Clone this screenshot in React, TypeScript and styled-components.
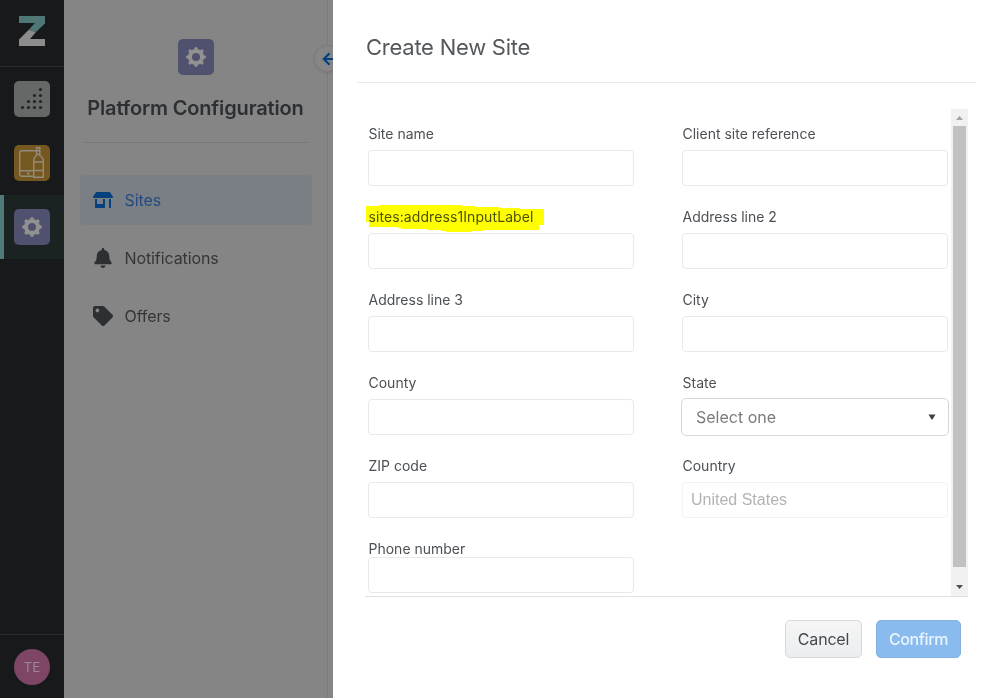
import React from "react";
import styled, { createGlobalStyle } from "styled-components";
import { FaBell, FaStoreAlt, FaTag } from "react-icons/fa";

const GlobalStyle = createGlobalStyle`
  * { box-sizing: border-box; }
  body { margin: 0; overflow: hidden; background: #858585; }
  body, button, select { font-family: Inter, "Open Sans", sans-serif; }
`;

const Page = styled.div`
  display: flex;
  width: 997px;
  height: 698px;
  overflow: hidden;
`;

const Rail = styled.aside`
  display: flex;
  flex-direction: column;
  width: 64px;
  background: #17191b;
`;

const RailLogo = styled.div`
  display: flex;
  justify-content: center;
  height: 67px;
  padding-top: 16px;
  border-bottom: 1px solid #292b2d;
`;

const RailItem = styled.div<{ $active?: boolean }>`
  display: flex;
  align-items: center;
  justify-content: center;
  height: 64px;
  padding-right: ${(p) => (p.$active ? "4px" : "0")};
  border-left: ${(p) => (p.$active ? "4px solid #4e7b79" : "0")};
  background: ${(p) => (p.$active ? "#1b2222" : "transparent")};
`;

const RailFooter = styled.div`
  display: flex;
  justify-content: center;
  height: 64px;
  margin-top: auto;
  padding-top: 14px;
  border-top: 1px solid #292b2d;
`;

const Tile = styled.div<{ $color: string }>`
  display: flex;
  align-items: center;
  justify-content: center;
  width: 36px;
  height: 36px;
  border-radius: 5px;
  background: ${(p) => p.$color};
`;

const Avatar = styled.div`
  width: 36px;
  height: 36px;
  border-radius: 50%;
  background: #7e4565;
  color: #9b8793;
  font-size: 13.5px;
  line-height: 36px;
  text-align: center;
`;

const Panel = styled.nav`
  position: relative;
  display: flex;
  flex-direction: column;
  align-items: center;
  width: 264px;
  padding-top: 39px;
  border-right: 1px solid #7b7b7b;
  background: #858585;
`;

const PanelTitle = styled.h2`
  margin: 20px 0 0;
  color: #2c3033;
  font-size: 20px;
  font-weight: 600;
  letter-spacing: -0.15px;
  line-height: 26px;
  white-space: nowrap;
`;

const PanelRule = styled.div`
  width: 224px;
  height: 1px;
  margin: 21px 0 32px;
  background: #787878;
`;

const NavItem = styled.a<{ $active?: boolean }>`
  display: flex;
  align-items: center;
  gap: 12px;
  width: 232px;
  height: 50px;
  margin-bottom: 8px;
  padding-left: 13px;
  border-radius: 4px;
  background: ${(p) => (p.$active ? "#7a7f85" : "transparent")};
  color: ${(p) => (p.$active ? "#234a80" : "#343638")};
  font-size: 16px;
  letter-spacing: -0.1px;

  svg {
    width: 20px;
    height: auto;
    color: ${(p) => (p.$active ? "#05417d" : "#2c3033")};
  }
`;

const CollapseButton = styled.div`
  position: absolute;
  top: 45px;
  right: -14px;
  display: flex;
  align-items: center;
  justify-content: center;
  width: 27px;
  height: 27px;
  padding-left: 2px;
  border: 1px solid #7d7d7d;
  border-radius: 50%;
  background: #868686;
  box-shadow: 0 1px 3px rgba(0, 0, 0, 0.12);
`;

const Dialog = styled.section`
  position: relative;
  width: 664px;
  margin-left: 5px;
  flex: none;
  background: #fff;
`;

const DialogTitle = styled.h1`
  height: 83px;
  margin: 0 21px 0 24px;
  padding: 33px 0 0 9px;
  border-bottom: 1px solid #e8e9e9;
  color: #55595c;
  font-size: 22px;
  font-weight: 400;
  letter-spacing: -0.25px;
  line-height: 28px;
`;

const ScrollArea = styled.div`
  display: flex;
  width: 603px;
  height: 488px;
  margin: 26px 0 0 32px;
  border-bottom: 1px solid #dfe1e2;
`;

const Fields = styled.form`
  display: grid;
  grid-template-columns: 266px 266px;
  grid-auto-rows: 83px;
  column-gap: 48px;
  width: 586px;
  padding-left: 3px;
  overflow: hidden;
`;

const FieldBox = styled.div<{ $tight?: boolean }>`
  display: flex;
  flex-direction: column;
  align-items: flex-start;
  gap: ${(p) => (p.$tight ? "0" : "7px")};
  padding-top: 16px;
`;

const Label = styled.label<{ $tight?: boolean; $marked?: boolean }>`
  position: relative;
  height: ${(p) => (p.$tight ? "17px" : "18px")};
  padding-left: 0.5px;
  color: #4c5054;
  font-size: 14px;
  letter-spacing: ${(p) => (p.$marked ? "0.09px" : "0")};
  line-height: 18px;
  white-space: nowrap;
`;

const Marker = styled.svg`
  position: absolute;
  top: -3px;
  left: -2px;
  mix-blend-mode: multiply;
`;

const Input = styled.input`
  width: 266px;
  height: 36px;
  flex: none;
  padding: 0 8px;
  border: 1px solid #e8e9ea;
  border-radius: 4px;
  outline: none;
  background: #fff;
  font: 16px "Liberation Sans", Arial, sans-serif;

  &:disabled {
    border-color: #f2f3f3;
    color: #b2b3b5;
  }
`;

const Select = styled.div`
  display: flex;
  align-items: center;
  justify-content: space-between;
  width: 268px;
  height: 38px;
  margin: -1px;
  padding: 0 12px 0 14px;
  border: 1px solid #d5d8da;
  border-radius: 5px;
  color: #797b7e;
  font-size: 16px;
`;

const Scrollbar = styled.div`
  display: flex;
  flex-direction: column;
  align-items: center;
  width: 17px;
  height: 487px;
  background: #f1f1f1;
`;

const ScrollArrow = styled.div`
  display: flex;
  align-items: center;
  justify-content: center;
  width: 17px;
  height: 17px;
`;

const Thumb = styled.div`
  width: 13px;
  height: 441px;
  margin-bottom: 11px;
  background: #c1c1c1;
`;

const Actions = styled.div`
  display: flex;
  justify-content: flex-end;
  gap: 14px;
  padding: 23px 36px 0 0;
`;

const Button = styled.button<{ $primary?: boolean }>`
  width: ${(p) => (p.$primary ? "85px" : "77px")};
  height: 38px;
  padding: 0;
  border: 1px solid ${(p) => (p.$primary ? "#83b1e0" : "#d7d9db")};
  border-radius: 5px;
  background: ${(p) => (p.$primary ? "#8abbee" : "linear-gradient(#f6f6f6, #ebedef)")};
  color: ${(p) => (p.$primary ? "#eaf4ff" : "#464a4e")};
  font-size: 16px;
  font-weight: ${(p) => (p.$primary ? 500 : 400)};
  letter-spacing: ${(p) => (p.$primary ? "-0.4px" : "-0.2px")};
`;

const GearIcon = () => (
  <svg width="20" height="20" viewBox="-10 -10 20 20" fill="none" stroke="#919191">
    <circle r="6" strokeWidth="4" />
    {[0, 45, 90, 135, 180, 225, 270, 315].map((angle) => (
      <path key={angle} d="M0-7V-8.3" strokeWidth="3.4" strokeLinecap="round" transform={`rotate(${angle})`} />
    ))}
  </svg>
);

const Logo = () => (
  <svg width="26" height="30" viewBox="0 0 26 30">
    <path d="M0 0H26V7.5L17 16L9.5 14L16 7H0Z" fill="#4e7775" />
    <path d="M9.5 14L17 16L11 23H26V30H0V23.500Z" fill="#8c8c8c" />
  </svg>
);

const dots = [[8, 27], [14, 27], [20, 27], [26, 27], [14, 21], [20, 21], [26, 21], [20, 15], [26, 15], [26, 9]];

const DotsIcon = () => (
  <svg width="36" height="36" fill="#222426">
    {dots.map(([x, y]) => (
      <circle key={`${x}-${y}`} cx={x + 0.5} cy={y - 0.5} r="1.6" />
    ))}
  </svg>
);

const TabletBottleIcon = () => (
  <svg width="36" height="36" fill="none" stroke="#948c7b" strokeWidth="1.4">
    <path d="M22 5.700H8Q5.700 5.700 5.700 8V29Q5.700 31.300 8 31.300H19.500M5.700 25.700H19.500" />
    <path d="M22.500 2.700H25.800V9.500Q25.800 11 27.500 11.800Q29.300 13 29.300 16V32.300H19.700V16Q19.700 13 21 11.800Q22.500 11 22.500 9.500ZM22.500 5.700H25.800M22.500 9.500H25.800M19.700 17H29.300M19.700 25.500H29.300" />
    <circle cx="14.300" cy="28.500" r=".5" />
  </svg>
);

const BackArrow = () => (
  <svg width="14" height="14" viewBox="0 0 14 14" fill="none" stroke="#074080" strokeWidth="2.200">
    <path d="M14 7H2M7.500 1.300L1.800 7L7.500 12.700" />
  </svg>
);

const Highlight = () => (
  <Marker width="178" height="27" viewBox="366 205 178 27" shapeRendering="crispEdges">
    <path
      fill="#ffff00"
      d="M366 206H380V205H462V206H476V207H499V208H520V209H544V225H539V230H483V231H472V232H446V231H441V230H427V229H402V228H398V227H369V222H366Z"
    />
  </Marker>
);

type FieldDef = {
  name: string;
  kind?: "select";
  value?: string;
  marked?: boolean;
  tight?: boolean;
};

const fields: FieldDef[] = [
  { name: "Site name" },
  { name: "Client site reference" },
  { name: "sites:address1InputLabel", marked: true },
  { name: "Address line 2" },
  { name: "Address line 3" },
  { name: "City" },
  { name: "County" },
  { name: "State", kind: "select", value: "Select one" },
  { name: "ZIP code" },
  { name: "Country", value: "United States" },
  { name: "Phone number", tight: true },
];

const Field = ({ name, kind, value, marked, tight }: FieldDef) => (
  <FieldBox $tight={tight}>
    <Label $tight={tight} $marked={marked}>
      {name}
      {marked && <Highlight />}
    </Label>
    {kind === "select" ? (
      <Select>
        {value}
        <svg width="8" height="6" fill="#3f4248"><path d="M.5 .5H7.500L4.500 5.500H3.500Z" /></svg>
      </Select>
    ) : (
      <Input defaultValue={value} disabled={Boolean(value)} aria-label={name} />
    )}
  </FieldBox>
);

export default function App() {
  return (
    <Page>
      <GlobalStyle />
      <Rail>
        <RailLogo><Logo /></RailLogo>
        <RailItem><Tile $color="#666767"><DotsIcon /></Tile></RailItem>
        <RailItem><Tile $color="#755720"><TabletBottleIcon /></Tile></RailItem>
        <RailItem $active><Tile $color="#50506f"><GearIcon /></Tile></RailItem>
        <RailFooter><Avatar>TE</Avatar></RailFooter>
      </Rail>
      <Panel>
        <Tile $color="#50506f"><GearIcon /></Tile>
        <PanelTitle>Platform Configuration</PanelTitle>
        <PanelRule />
        <NavItem $active><FaStoreAlt />Sites</NavItem>
        <NavItem><FaBell />Notifications</NavItem>
        <NavItem><FaTag />Offers</NavItem>
        <CollapseButton><BackArrow /></CollapseButton>
      </Panel>
      <Dialog>
        <DialogTitle>Create New Site</DialogTitle>
        <ScrollArea>
          <Fields>
            {fields.map((field) => <Field key={field.name} {...field} />)}
          </Fields>
          <Scrollbar>
            <ScrollArrow><svg width="7" height="4" fill="#a3a3a3"><path d="M0 4L3.500 0L7 4Z" /></svg></ScrollArrow>
            <Thumb />
            <ScrollArrow><svg width="7" height="4" fill="#505050"><path d="M0 0H7L3.500 4Z" /></svg></ScrollArrow>
          </Scrollbar>
        </ScrollArea>
        <Actions>
          <Button>Cancel</Button>
          <Button $primary>Confirm</Button>
        </Actions>
      </Dialog>
    </Page>
  );
}
